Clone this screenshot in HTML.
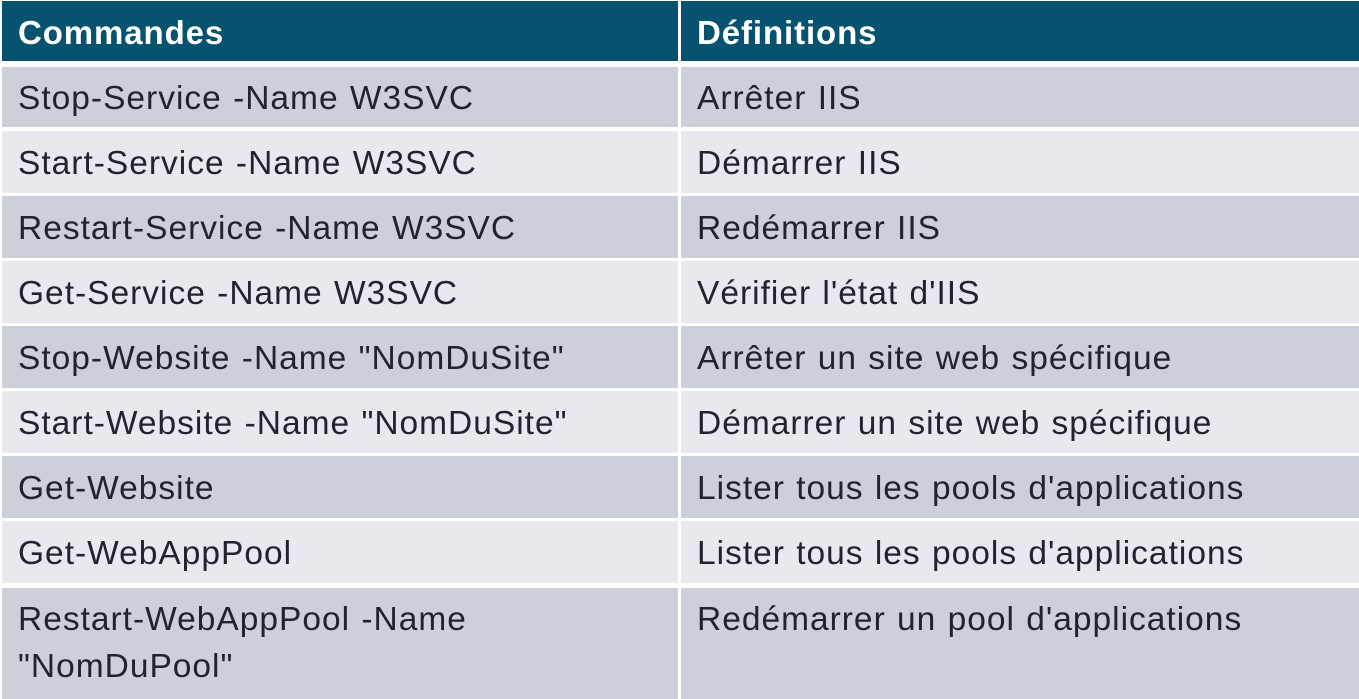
<!DOCTYPE html>
<html><head><meta charset="utf-8"><style>
body{margin:0;width:1359px;height:699px;background:#fff;position:relative;overflow:hidden;font-family:"Liberation Sans",sans-serif;}
.c{position:absolute;box-sizing:border-box;padding-left:16px;font-size:33.5px;letter-spacing:1px;word-spacing:1px;color:#23232f;line-height:47px;white-space:nowrap;}
.h{background:#06526f;color:#fff;font-weight:bold;font-size:33px;letter-spacing:0.9px;word-spacing:0;}
.o{background:#cdd0db}.e{background:#e8e9ee}
</style></head><body>
<div class="c h" style="left:2px;top:1px;width:676px;height:60px;padding-top:8px">Commandes</div>
<div class="c h" style="left:681px;top:1px;width:678px;height:60px;padding-top:8px">Définitions</div>

<div class="c o" style="left:2px;top:67px;width:676px;height:60px;padding-top:8px">Stop-Service -Name W3SVC</div>
<div class="c o" style="left:681px;top:67px;width:678px;height:60px;padding-top:8px">Arrêter IIS</div>

<div class="c e" style="left:2px;top:131px;width:676px;height:62px;padding-top:9px">Start-Service -Name W3SVC</div>
<div class="c e" style="left:681px;top:131px;width:678px;height:62px;padding-top:9px">Démarrer IIS</div>

<div class="c o" style="left:2px;top:196px;width:676px;height:62px;padding-top:9px">Restart-Service -Name W3SVC</div>
<div class="c o" style="left:681px;top:196px;width:678px;height:62px;padding-top:9px">Redémarrer IIS</div>

<div class="c e" style="left:2px;top:261px;width:676px;height:62px;padding-top:9px">Get-Service -Name W3SVC</div>
<div class="c e" style="left:681px;top:261px;width:678px;height:62px;padding-top:9px">Vérifier l'état d'IIS</div>

<div class="c o" style="left:2px;top:326px;width:676px;height:62px;padding-top:9px">Stop-Website -Name "NomDuSite"</div>
<div class="c o" style="left:681px;top:326px;width:678px;height:62px;padding-top:9px">Arrêter un site web spécifique</div>

<div class="c e" style="left:2px;top:391px;width:676px;height:62px;padding-top:9px">Start-Website -Name "NomDuSite"</div>
<div class="c e" style="left:681px;top:391px;width:678px;height:62px;padding-top:9px">Démarrer un site web spécifique</div>

<div class="c o" style="left:2px;top:456px;width:676px;height:62px;padding-top:9px">Get-Website</div>
<div class="c o" style="left:681px;top:456px;width:678px;height:62px;padding-top:9px">Lister tous les pools d'applications</div>

<div class="c e" style="left:2px;top:521px;width:676px;height:62px;padding-top:9px">Get-WebAppPool</div>
<div class="c e" style="left:681px;top:521px;width:678px;height:62px;padding-top:9px">Lister tous les pools d'applications</div>

<div class="c o" style="left:2px;top:588px;width:676px;height:111px;padding-top:8px">Restart-WebAppPool -Name<br>"NomDuPool"</div>
<div class="c o" style="left:681px;top:588px;width:678px;height:111px;padding-top:8px">Redémarrer un pool d'applications</div>
</body></html>
